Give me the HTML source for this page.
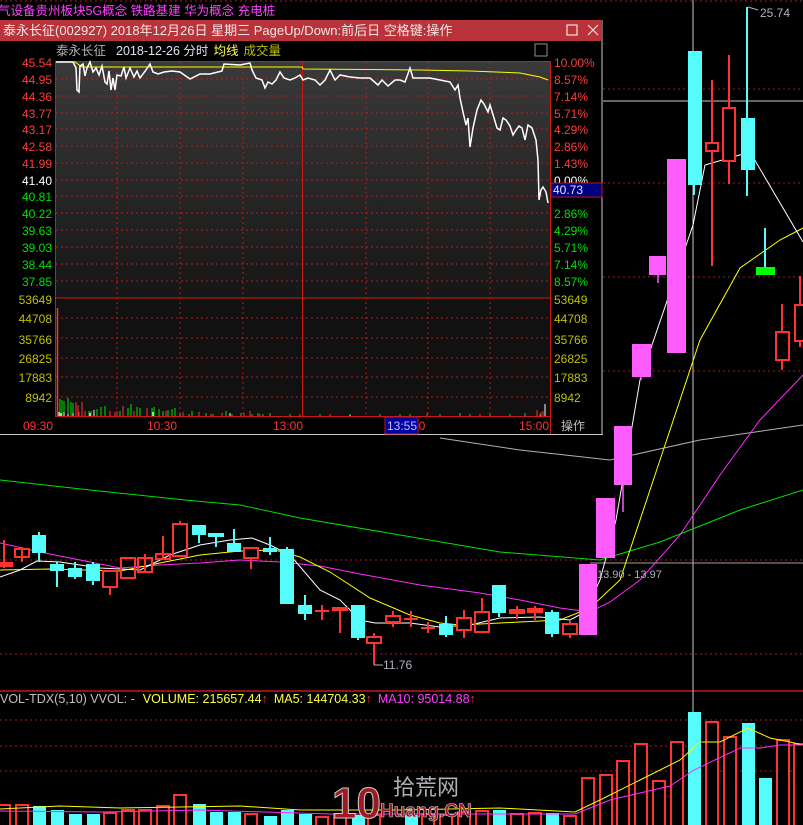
<!DOCTYPE html>
<html><head><meta charset="utf-8"><style>
body{margin:0;background:#000;width:803px;height:825px;overflow:hidden;font-family:"Liberation Sans","Noto Sans CJK SC",sans-serif}
svg{display:block}
text{font-family:"Liberation Sans","Noto Sans CJK SC",sans-serif}
</style></head><body>
<svg width="803" height="825" viewBox="0 0 803 825" xmlns="http://www.w3.org/2000/svg">
<rect width="803" height="825" fill="#000"/>
<!-- dotted grid main -->
<g stroke="#b01818" stroke-dasharray="2,3" stroke-width="1">
<line x1="0" y1="1" x2="803" y2="1"/>
<line x1="603" y1="89" x2="803" y2="89"/>
<line x1="603" y1="183" x2="803" y2="183"/>
<line x1="603" y1="277" x2="803" y2="277"/>
<line x1="603" y1="371" x2="803" y2="371"/>
<line x1="0" y1="560" x2="803" y2="560"/>
<line x1="0" y1="654" x2="803" y2="654"/>
<line x1="0" y1="720" x2="803" y2="720"/>
<line x1="0" y1="746" x2="803" y2="746"/>
<line x1="0" y1="771" x2="803" y2="771"/>
</g>
<line x1="0" y1="691" x2="803" y2="691" stroke="#c01818" stroke-width="1.5"/>
<!-- crosshair -->
<line x1="693" y1="0" x2="693" y2="825" stroke="#c8c8c8" stroke-width="1"/>
<line x1="603" y1="101" x2="803" y2="101" stroke="#c8c8c8" stroke-width="1"/>
<line x1="590" y1="563" x2="803" y2="563" stroke="#a0a0a0" stroke-width="1"/>
<!-- MA lines -->
<polyline fill="none" stroke="#00e000" stroke-width="1" points="0,480 90,490 185,500 240,505 300,518 400,535 500,552 600,560 660,542 740,510 803,490"/>
<polyline fill="none" stroke="#b0b0b0" stroke-width="1" points="440,438 520,450 610,460 700,440 803,425"/>
<polyline fill="none" stroke="#ff2cff" stroke-width="1" points="0,543 40,552 80,560 120,568 160,565 200,563 240,560 280,562 320,566 360,574 420,585 480,593 520,600 560,608 590,612 610,602 640,580 680,535 720,475 760,420 803,375"/>
<polyline fill="none" stroke="#ffff00" stroke-width="1" points="0,570 50,569 120,571 165,562 200,555 240,551 275,550 300,557 330,572 370,598 410,615 440,623 460,625 500,623 560,620 590,608 620,580 660,460 700,340 740,268 780,240 803,228"/>
<polyline fill="none" stroke="#ffffff" stroke-width="1" points="0,577 20,570 37,561 60,562 100,568 140,570 170,555 200,545 230,540 252,538 270,545 290,555 320,590 340,600 360,620 375,623 410,623 440,627 470,625 500,618 540,617 570,620 585,612 600,580 616,520 640,380 693,225 705,165 750,152 803,242"/>
<!-- candles -->
<g stroke="#ff3232" stroke-width="2" fill="none">
<line x1="4" y1="540" x2="4" y2="568"/><rect x="-4" y="563" width="16" height="3" fill="#ff3232"/>
<line x1="22" y1="547" x2="22" y2="562"/><rect x="15" y="549" width="14" height="8"/>
<line x1="110" y1="571" x2="110" y2="595"/><rect x="103" y="571" width="14" height="16" fill="#000"/>
<rect x="121" y="558" width="14" height="20"/>
<line x1="145" y1="554" x2="145" y2="573"/><rect x="138" y="558" width="14" height="14"/>
<line x1="163" y1="536" x2="163" y2="559"/><rect x="156" y="554" width="14" height="5"/>
<line x1="180" y1="521" x2="180" y2="524"/><rect x="173" y="524" width="14" height="32"/>
<line x1="251" y1="555" x2="251" y2="569"/><rect x="244" y="548" width="14" height="10" fill="#000"/>
<line x1="322" y1="605" x2="322" y2="620"/><line x1="315" y1="611" x2="329" y2="611"/>
<line x1="340" y1="608" x2="340" y2="633"/><rect x="333" y="608" width="14" height="2" fill="#ff3232"/>
<line x1="374" y1="633" x2="374" y2="665"/><rect x="367" y="637" width="14" height="6" fill="#000"/>
<line x1="393" y1="611" x2="393" y2="627"/><rect x="386" y="616" width="14" height="6" fill="#000"/>
<line x1="411" y1="611" x2="411" y2="627"/><line x1="404" y1="619" x2="418" y2="619"/>
<line x1="428" y1="622" x2="428" y2="633"/><line x1="421" y1="628" x2="435" y2="628"/>
<line x1="464" y1="610" x2="464" y2="638"/><rect x="457" y="618" width="14" height="12" fill="#000"/>
<line x1="482" y1="598" x2="482" y2="612"/><rect x="475" y="612" width="14" height="20"/>
<line x1="517" y1="606" x2="517" y2="619"/><rect x="510" y="610" width="14" height="3" fill="#ff3232"/>
<line x1="535" y1="606" x2="535" y2="620"/><rect x="528" y="609" width="14" height="3" fill="#ff3232"/>
<line x1="570" y1="621" x2="570" y2="638"/><rect x="563" y="624" width="14" height="10" fill="#000"/>
<line x1="712" y1="80" x2="712" y2="266"/><rect x="706" y="143" width="12" height="8" fill="#000"/>
<line x1="729" y1="55" x2="729" y2="184"/><rect x="723" y="108" width="12" height="53" fill="#000"/>
<line x1="782" y1="304" x2="782" y2="370"/><rect x="776" y="332" width="13" height="28" fill="#000"/>
<line x1="800" y1="276" x2="800" y2="347"/><rect x="795" y="305" width="12" height="36" fill="#000"/>
</g>
<g fill="#54fcfc" stroke="#54fcfc" stroke-width="2">
<line x1="39" y1="532" x2="39" y2="562"/><rect x="33" y="536" width="12" height="16"/>
<line x1="57" y1="562" x2="57" y2="587"/><rect x="51" y="565" width="12" height="5"/>
<line x1="75" y1="562" x2="75" y2="579"/><rect x="69" y="569" width="12" height="7"/>
<line x1="93" y1="562" x2="93" y2="585"/><rect x="87" y="565" width="12" height="15"/>
<line x1="199" y1="526" x2="199" y2="543"/><rect x="193" y="526" width="12" height="8"/>
<line x1="216" y1="534" x2="216" y2="547"/><rect x="209" y="534" width="14" height="2"/>
<line x1="234" y1="529" x2="234" y2="552"/><rect x="228" y="544" width="12" height="7"/>
<line x1="270" y1="537" x2="270" y2="555"/><rect x="264" y="549" width="12" height="2"/>
<line x1="287" y1="547" x2="287" y2="604"/><rect x="281" y="550" width="12" height="53"/>
<line x1="305" y1="595" x2="305" y2="620"/><rect x="299" y="606" width="12" height="7"/>
<line x1="358" y1="606" x2="358" y2="640"/><rect x="352" y="606" width="12" height="31"/>
<line x1="446" y1="616" x2="446" y2="637"/><rect x="440" y="625" width="12" height="9"/>
<line x1="499" y1="586" x2="499" y2="617"/><rect x="493" y="586" width="12" height="26"/>
<line x1="552" y1="610" x2="552" y2="637"/><rect x="546" y="613" width="12" height="20"/>
<line x1="694" y1="52" x2="694" y2="195"/><rect x="689" y="52" width="12" height="132"/>
<line x1="747" y1="7" x2="747" y2="196"/><rect x="742" y="119" width="12" height="50"/>
<line x1="765" y1="228" x2="765" y2="267"/>
</g>
<rect x="756" y="267" width="19" height="8" fill="#00ff00"/>
<g fill="#ff5cff">
<rect x="579" y="564" width="18" height="71"/>
<rect x="596" y="498" width="19" height="60"/>
<rect x="614" y="426" width="18" height="59"/>
<rect x="632" y="344" width="19" height="33"/>
<rect x="649" y="256" width="17" height="19"/>
<rect x="667" y="159" width="19" height="194"/>
</g>
<g stroke="#ff5cff" stroke-width="1.5"><line x1="623" y1="485" x2="623" y2="512"/><line x1="658" y1="275" x2="658" y2="283"/><line x1="641" y1="377" x2="641" y2="380"/></g>
<text x="760" y="17" fill="#b0b0c0" font-size="12">25.74</text>
<path d="M748 7 L758 10" stroke="#b0b0c0"/>
<text x="383" y="669" fill="#b0b0c0" font-size="12">11.76</text>
<path d="M374 665 L383 665" stroke="#b0b0c0"/>
<text x="597" y="578" fill="#b0b0c0" font-size="11">13.90 - 13.97</text>
<!-- volume -->
<g stroke="#ff3232" stroke-width="2" fill="#000">
<rect x="-2" y="805" width="12" height="22"/><rect x="16" y="805" width="12" height="22"/>
<rect x="104" y="813" width="12" height="14"/><rect x="122" y="810" width="12" height="17"/><rect x="139" y="810" width="12" height="17"/><rect x="157" y="806" width="12" height="21"/><rect x="174" y="795" width="12" height="32"/>
<rect x="245" y="814" width="12" height="13"/><rect x="316" y="817" width="12" height="10"/><rect x="334" y="814" width="12" height="13"/><rect x="368" y="815" width="12" height="12"/>
<rect x="422" y="814" width="12" height="13"/><rect x="440" y="815" width="12" height="12"/><rect x="458" y="812" width="12" height="15"/><rect x="476" y="811" width="12" height="16"/><rect x="511" y="814" width="12" height="13"/><rect x="529" y="813" width="12" height="14"/><rect x="564" y="816" width="12" height="11"/>
<rect x="582" y="778" width="12" height="49"/><rect x="600" y="775" width="12" height="52"/><rect x="617" y="761" width="12" height="66"/><rect x="635" y="744" width="12" height="83"/><rect x="653" y="781" width="12" height="46"/><rect x="671" y="742" width="12" height="85"/><rect x="706" y="722" width="12" height="105"/><rect x="724" y="737" width="12" height="90"/><rect x="777" y="740" width="12" height="87"/><rect x="794" y="744" width="12" height="83"/>
</g>
<g fill="#54fcfc">
<rect x="33" y="806" width="13" height="19"/><rect x="51" y="810" width="13" height="15"/><rect x="69" y="814" width="13" height="11"/><rect x="87" y="814" width="13" height="11"/><rect x="193" y="804" width="13" height="21"/><rect x="210" y="812" width="13" height="13"/><rect x="228" y="812" width="13" height="13"/><rect x="264" y="816" width="13" height="9"/><rect x="281" y="810" width="13" height="15"/><rect x="299" y="814" width="13" height="11"/><rect x="352" y="815" width="13" height="10"/><rect x="405" y="815" width="13" height="10"/><rect x="493" y="810" width="13" height="15"/><rect x="546" y="813" width="13" height="12"/><rect x="688" y="712" width="13" height="113"/><rect x="742" y="723" width="13" height="102"/><rect x="759" y="778" width="13" height="47"/>
</g>
<polyline fill="none" stroke="#ffff00" stroke-width="1" points="0,809 60,806 120,808 180,807 240,806 300,810 400,810 500,808 575,812 600,800 640,780 680,760 700,742 720,742 748,728 770,738 790,742 803,745"/>
<polyline fill="none" stroke="#ff2cff" stroke-width="1" points="0,811 100,812 200,810 330,814 450,814 575,814 610,800 640,793 670,786 694,770 740,748 760,748 780,745 803,745"/>
<text x="0" y="703" font-size="12.5"><tspan fill="#c0c0c0">VOL-TDX(5,10) VVOL: -</tspan><tspan fill="#ffff40" dx="8">VOLUME: 215657.44</tspan><tspan fill="#ff3232">↑</tspan><tspan fill="#ffff40" dx="6">MA5: 144704.33</tspan><tspan fill="#ff3232">↑</tspan><tspan fill="#ff3cff" dx="6">MA10: 95014.88</tspan><tspan fill="#ff3232">↑</tspan></text>
<!-- watermark -->
<text x="332" y="818" fill="#a01820" font-size="44" font-weight="bold" stroke="#d0d0d0" stroke-width="1">10</text>
<text x="393" y="795" fill="#b0b0b0" font-size="22">拾荒网</text>
<text x="380" y="817" fill="#a01820" font-size="19" font-weight="bold" stroke="#d0d0d0" stroke-width="0.6">Huang.CN</text>
<!-- top text -->
<text x="-2" y="15" fill="#ff40ff" font-size="12.5">气设备贵州板块5G概念 铁路基建 华为概念 充电桩</text>
<!-- popup -->
<rect x="0" y="20" width="603" height="415" fill="#000"/>
<line x1="602" y1="20" x2="602" y2="435" stroke="#c8c8c8"/>
<line x1="0" y1="434.5" x2="603" y2="434.5" stroke="#c8c8c8"/>
<rect x="0" y="20" width="602" height="21" fill="#b8333a"/>
<text x="3" y="35" fill="#f4e6e6" font-size="13">泰永长征(002927) 2018年12月26日 星期三 PageUp/Down:前后日 空格键:操作</text>
<rect x="567" y="25" width="10" height="10" fill="none" stroke="#f0e0e0" stroke-width="1.2"/>
<path d="M588 25 L598 35 M598 25 L588 35" stroke="#f0e0e0" stroke-width="1.2"/>
<text x="56" y="55" font-size="12.5"><tspan fill="#b0b0b0">泰永长征</tspan><tspan fill="#e0e0f0" dx="10">2018-12-26 分时</tspan><tspan fill="#ffff40" dx="5">均线</tspan><tspan fill="#c0c000" dx="5">成交量</tspan></text>
<rect x="535" y="44" width="12" height="12" fill="none" stroke="#909090"/>
<defs><linearGradient id="g" x1="0" y1="0" x2="0" y2="1"><stop offset="0" stop-color="#3a3a3a"/><stop offset="1" stop-color="#161616"/></linearGradient></defs>
<rect x="55" y="61" width="495" height="237" fill="url(#g)"/>
<rect x="55" y="298" width="495" height="118" fill="#111"/>
<g stroke="#c01818" stroke-dasharray="2,3">
<line x1="56" y1="79" x2="550" y2="79"/><line x1="56" y1="96" x2="550" y2="96"/><line x1="56" y1="113" x2="550" y2="113"/><line x1="56" y1="129" x2="550" y2="129"/><line x1="56" y1="146" x2="550" y2="146"/><line x1="56" y1="163" x2="550" y2="163"/><line x1="56" y1="180" x2="550" y2="180"/><line x1="56" y1="196" x2="550" y2="196"/><line x1="56" y1="213" x2="550" y2="213"/><line x1="56" y1="230" x2="550" y2="230"/><line x1="56" y1="247" x2="550" y2="247"/><line x1="56" y1="264" x2="550" y2="264"/><line x1="56" y1="281" x2="550" y2="281"/>
<line x1="56" y1="318" x2="550" y2="318"/><line x1="56" y1="338" x2="550" y2="338"/><line x1="56" y1="358" x2="550" y2="358"/><line x1="56" y1="377" x2="550" y2="377"/><line x1="56" y1="397" x2="550" y2="397"/>
<line x1="117" y1="62" x2="117" y2="416"/><line x1="180" y1="62" x2="180" y2="416"/><line x1="243" y1="62" x2="243" y2="416"/><line x1="366" y1="62" x2="366" y2="416"/><line x1="428" y1="62" x2="428" y2="416"/><line x1="490" y1="62" x2="490" y2="416"/>
</g>
<g stroke="#d01818" fill="none">
<rect x="55.5" y="61.5" width="495" height="355"/>
<line x1="55" y1="298" x2="550" y2="298"/>
<line x1="302.5" y1="62" x2="302.5" y2="416"/>
<line x1="550.5" y1="416" x2="550.5" y2="434"/>
</g>
<polyline fill="none" stroke="#ffff00" stroke-width="1" points="56,62 75,62 82,67 200,67 302,67 303,69 420,70 470,71 520,73 540,77 548,80"/>
<polyline fill="none" stroke="#fff" stroke-width="1.5" points="56,62 73,62 76,68 77,90 79,92 80,66 83,64 85,76 87,68 90,62 93,72 96,68 99,75 102,66 105,82 107,84 109,71 111,90 113,78 115,90 117,75 121,76 124,67 126,78 130,68 134,77 137,71 140,78 146,70 150,64 153,72 158,74 164,72 172,71 180,72 190,79 200,74 210,74 222,71 224,64 240,65 250,63 252,70 256,78 262,80 265,88 268,82 272,84 276,80 280,72 284,78 290,80 295,78 300,75 303,80 308,78 315,80 320,85 325,80 330,70 335,80 340,75 350,77 360,78 370,78 378,85 382,80 388,86 395,80 400,80 405,82 410,68 413,78 420,78 430,78 440,80 450,82 455,90 458,85 460,98 463,112 466,125 468,118 470,147 473,128 477,110 481,100 484,104 488,112 490,105 494,118 497,128 500,130 503,118 506,120 510,126 513,135 516,130 519,126 522,128 525,140 528,125 532,128 536,140 538,160 539,200 541,190 543,187 546,192 548,203"/>
<!-- volume bars in popup -->
<g stroke-width="1">
<line x1="57.5" y1="308" x2="57.5" y2="416" stroke="#ff3232" stroke-width="1.5"/>
<path d="M60 416V399M62 416V400M64 416V401M68 416V398M71 416V402M73 416V403M89 416V411M91 416V411M97 416V409M101 416V407M105 416V406M120 416V411M128 416V408M131 416V404M137 416V407M140 416V408M152 416V408M154 416V407M159 416V409M163 416V411M168 416V410M172 416V409M175 416V408M180 416V413M189 416V414M192 416V411M199 416V412M206 416V413M213 416V414M222 416V413M226 416V411M232 416V414M241 416V413M252 416V414M258 416V413M263 416V414M270 416V413M290 416V414M320 416V414M350 416V414M380 416V414M400 416V414M410 416V414M440 416V414M460 416V413M470 416V414M490 416V414M510 416V414M525 416V413M540 416V414" stroke="#00e000"/>
<path d="M76 416V402M78 416V405M79 416V412M82 416V402M85 416V411M110 416V411M115 416V412M117 416V411M123 416V406M134 416V411M147 416V408M166 416V411M183 416V412M199 416V413M211 416V414M222 416V414M244 416V413M250 416V411M260 416V414M300 416V414M330 416V414M427 416V413M480 416V414M537 416V410M541 416V412M543 416V411" stroke="#ff3232"/>
<path d="M59 416V412M61 416V413M64 416V412M68 416V414M73 416V413M90 416V413M94 416V410M153 416V412M230 416V413M350 416V415M545 416V404" stroke="#fff"/>
</g>
<!-- labels -->
<g font-size="12" text-anchor="end">
<text x="52" y="67" fill="#ff3c3c">45.54</text><text x="52" y="84" fill="#ff3c3c">44.95</text><text x="52" y="101" fill="#ff3c3c">44.36</text><text x="52" y="118" fill="#ff3c3c">43.77</text><text x="52" y="134" fill="#ff3c3c">43.17</text><text x="52" y="151" fill="#ff3c3c">42.58</text><text x="52" y="168" fill="#ff3c3c">41.99</text><text x="52" y="185" fill="#fff">41.40</text><text x="52" y="201" fill="#00e000">40.81</text><text x="52" y="218" fill="#00e000">40.22</text><text x="52" y="235" fill="#00e000">39.63</text><text x="52" y="252" fill="#00e000">39.03</text><text x="52" y="269" fill="#00e000">38.44</text><text x="52" y="286" fill="#00e000">37.85</text>
<g fill="#c0c000"><text x="52" y="304">53649</text><text x="52" y="323">44708</text><text x="52" y="344">35766</text><text x="52" y="363">26825</text><text x="52" y="382">17883</text><text x="52" y="402">8942</text></g>
</g>
<g font-size="12">
<text x="554" y="67" fill="#ff3c3c">10.00%</text><text x="554" y="84" fill="#ff3c3c">8.57%</text><text x="554" y="101" fill="#ff3c3c">7.14%</text><text x="554" y="118" fill="#ff3c3c">5.71%</text><text x="554" y="134" fill="#ff3c3c">4.29%</text><text x="554" y="151" fill="#ff3c3c">2.86%</text><text x="554" y="168" fill="#ff3c3c">1.43%</text><text x="554" y="185" fill="#fff">0.00%</text>
<rect x="551" y="183" width="51" height="14" fill="#000080" stroke="#c01818"/><text x="553" y="194" fill="#e0e0ff">40.73</text>
<text x="554" y="218" fill="#00e000">2.86%</text><text x="554" y="235" fill="#00e000">4.29%</text><text x="554" y="252" fill="#00e000">5.71%</text><text x="554" y="269" fill="#00e000">7.14%</text><text x="554" y="286" fill="#00e000">8.57%</text>
<g fill="#c0c000"><text x="554" y="304">53649</text><text x="554" y="323">44708</text><text x="554" y="344">35766</text><text x="554" y="363">26825</text><text x="554" y="382">17883</text><text x="554" y="402">8942</text></g>
<g fill="#ff3232"><text x="23" y="430">09:30</text><text x="147" y="430">10:30</text><text x="273" y="430">13:00</text><text x="412" y="430">00</text><text x="519" y="430">15:00</text></g>
<rect x="385" y="417" width="33" height="17" fill="#0000a0" stroke="#c01818"/><text x="387" y="430" fill="#c0c0ff">13:55</text>
<text x="561" y="430" fill="#c0c0c0">操作</text>
</g>
</svg>
</body></html>
